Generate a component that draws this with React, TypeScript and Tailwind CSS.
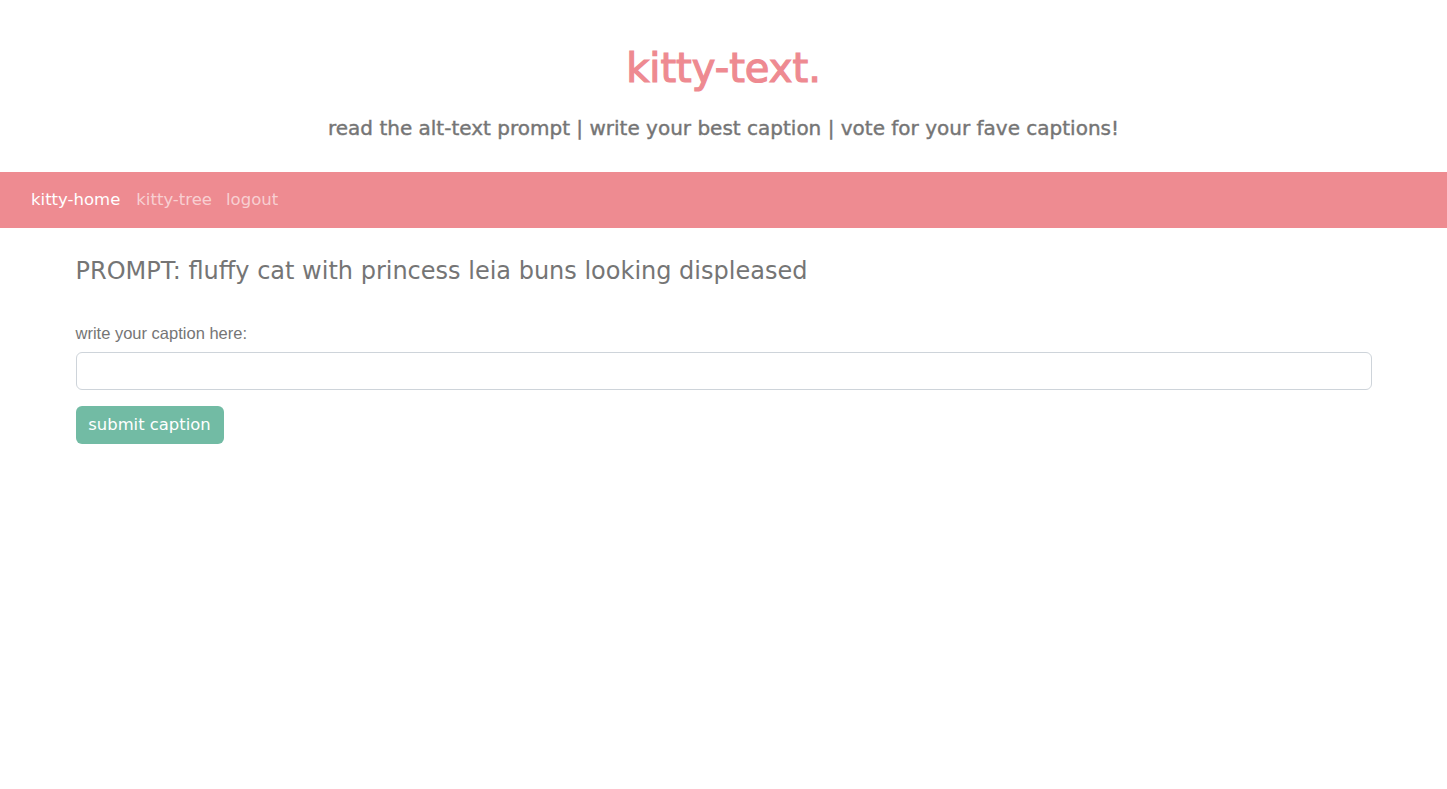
export default function App() {
  const mont = { fontFamily: '"DejaVu Sans", sans-serif' };
  return (
    <div className="min-h-screen bg-white">
      <header className="flex flex-col items-center pt-[42px] pb-[32px]" style={mont}>
        <h1 className="text-[40px] leading-[52px] text-[#ee8a91] [-webkit-text-stroke:1.2px_#ee8a91]">kitty-text.</h1>
        <h5 className="mt-[22px] text-[20px] leading-[24px] text-[#757575] [-webkit-text-stroke:0.4px_#757575]">
          read the alt-text prompt | write your best caption | vote for your fave captions!
        </h5>
      </header>
      <nav className="flex h-[56px] items-center bg-[#ee8b91] px-[31px] gap-[14px] text-[16.5px]" style={mont}>
        <a className="text-white">kitty-home</a>
        <a className="ml-[2px] text-white/60">kitty-tree</a>
        <a className="text-white/60">logout</a>
      </nav>
      <main className="mx-auto w-[1296px] pt-[29px]">
        <h4 className="text-[24px] leading-[29px] text-[#757575]" style={mont}>
          PROMPT: fluffy cat with princess leia buns looking displeased
        </h4>
        <label
          className="mt-[35px] block text-[16.5px] leading-[24px] text-[#757575]"
          style={{ fontFamily: '"Liberation Sans", sans-serif' }}
        >
          write your caption here:
        </label>
        <input className="mt-[7px] block h-[38px] w-full rounded-[6px] border border-[#ced4da] bg-white px-3" />
        <button
          className="mt-[16px] h-[38px] w-[148px] rounded-[6px] bg-[#72bba4] text-[16.4px] text-white"
          style={mont}
        >
          submit caption
        </button>
      </main>
    </div>
  );
}
